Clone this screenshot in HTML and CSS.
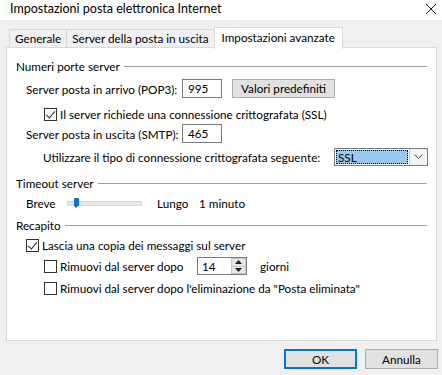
FILE: index.html
```html
<!DOCTYPE html>
<html lang="it">
<head>
  <meta charset="UTF-8">
  <title>Impostazioni posta elettronica Internet</title>
  <link rel="stylesheet" href="styles.css">
</head>
<body>
  <div class="dialog">
    <div class="titlebar">
      <span class="title">Impostazioni posta elettronica Internet</span>
      <svg class="close" width="12" height="12" viewBox="0 0 12 12"><path d="M1 1 L11 11 M11 1 L1 11" stroke="#222" stroke-width="1" fill="none"/></svg>
    </div>

    <div class="tabs">
      <div class="tab">Generale</div>
      <div class="tab">Server della posta in uscita</div>
      <div class="tab active">Impostazioni avanzate</div>
    </div>

    <div class="panel">
      <!-- Numeri porte server -->
      <div class="group-title"><span>Numeri porte server</span></div>
      <div class="row row-pop3">
        <label class="field-label">Server posta in arrivo (POP3):</label>
        <div class="textbox">995</div>
        <div class="btn btn-default">Valori predefiniti</div>
      </div>
      <div class="row row-ssl indent2">
        <span class="checkbox checked"></span>
        <span>Il server richiede una connessione crittografata (SSL)</span>
      </div>
      <div class="row row-smtp">
        <label class="field-label">Server posta in uscita (SMTP):</label>
        <div class="textbox">465</div>
      </div>
      <div class="row row-enc">
        <span class="enc-label">Utilizzare il tipo di connessione crittografata seguente:</span>
        <div class="select">
          <div class="select-value"><span>SSL</span></div>
          <div class="select-arrow">
            <svg width="9" height="6" viewBox="0 0 9 6"><path d="M0.5 0.5 L4.5 4.5 L8.5 0.5" stroke="#555" fill="none"/></svg>
          </div>
        </div>
      </div>

      <!-- Timeout server -->
      <div class="group-title gap-timeout"><span>Timeout server</span></div>
      <div class="row row-slider">
        <span class="slider-min">Breve</span>
        <div class="slider">
          <div class="track"></div>
          <div class="thumb"></div>
        </div>
        <span class="slider-max">Lungo</span>
        <span>1 minuto</span>
      </div>

      <!-- Recapito -->
      <div class="group-title gap-recapito"><span>Recapito</span></div>
      <div class="row row-copy">
        <span class="checkbox checked"></span>
        <span>Lascia una copia dei messaggi sul server</span>
      </div>
      <div class="row row-remove indent2">
        <span class="checkbox"></span>
        <span class="remove-label">Rimuovi dal server dopo</span>
        <div class="spinner">
          <div class="spin-value">14</div>
          <div class="spin-buttons">
            <div class="spin-btn"><svg width="7" height="4" viewBox="0 0 7 4"><path d="M0 4 L3.5 0 L7 4 Z" fill="#222"/></svg></div>
            <div class="spin-btn"><svg width="7" height="4" viewBox="0 0 7 4"><path d="M0 0 L3.5 4 L7 0 Z" fill="#222"/></svg></div>
          </div>
        </div>
        <span>giorni</span>
      </div>
      <div class="row row-remove2 indent2">
        <span class="checkbox"></span>
        <span>Rimuovi dal server dopo l'eliminazione da "Posta eliminata"</span>
      </div>
    </div>

    <div class="actions">
      <div class="btn btn-ok">OK</div>
      <div class="btn">Annulla</div>
    </div>
  </div>
</body>
</html>
```

FILE: styles.css
```css
body {
  margin: 0;
  background: #f0f0f0;
  font-family: Lato, "Noto Sans", sans-serif;
  font-size: 11.7px;
  color: #000;
}

.dialog {
  width: 442px;
  height: 375px;
  overflow: hidden;
  white-space: nowrap;
}

.titlebar {
  height: 20px;
  background: #fff;
  display: flex;
  align-items: center;
  justify-content: space-between;
  padding: 0 5px 0 10px;
  font-size: 12.5px;
  color: #000;
}

.titlebar .title {
  margin-top: -3px;
}

.close {
  margin-top: -3px;
}

/* schede */
.tabs {
  display: flex;
  margin: 9px 0 0 9px;
  height: 18px;
  position: relative;
  z-index: 1;
}

.tab {
  height: 18px;
  box-sizing: border-box;
  border: 1px solid #d9d9d9;
  border-bottom: none;
  padding: 0 5px;
  line-height: 17px;
  background: #f0f0f0;
  margin-left: -1px;
}

.tab:first-child {
  margin-left: 0;
}

.tab.active {
  background: #fff;
  height: 22px;
  margin-top: -2px;
  padding: 0 7px;
  line-height: 19px;
}

.panel {
  margin-left: 6px;
  width: 431px;
  height: 294px;
  box-sizing: border-box;
  background: #fff;
  border: 1px solid #d9d9d9;
  padding: 10px 9px 0 9px;
}

.group-title {
  display: flex;
  align-items: center;
  height: 16px;
}

.group-title::after {
  content: "";
  flex: 1;
  height: 1px;
  background: #a0a0a0;
  margin-left: 4px;
}

.gap-timeout { margin-top: 9px; }
.gap-recapito { margin-top: 6px; }

.row {
  display: flex;
  align-items: center;
  padding-left: 10px;
  height: 16px;
}

.row > * {
  flex: none;
}

.indent2 {
  padding-left: 28px;
}

.row-pop3 { height: 19px; margin-top: 5px; }
.row-ssl { margin-top: 8px; }
.row-smtp { height: 19px; margin-top: 2px; }
.row-enc { height: 18px; margin-top: 5px; padding-left: 27px; }
.row-slider { margin-top: 4px; }
.row-copy { margin-top: 4px; }
.row-remove { height: 18px; margin-top: 4px; }
.row-remove2 { margin-top: 5px; }

.field-label {
  width: 156px;
}

.textbox {
  width: 40px;
  height: 19px;
  box-sizing: border-box;
  border: 1px solid #7a7a7a;
  padding: 0 5px;
  line-height: 17px;
  background: #fff;
}

.btn {
  width: 73px;
  height: 20px;
  box-sizing: border-box;
  border: 1px solid #adadad;
  background: #e1e1e1;
  text-align: center;
  line-height: 18px;
}

.btn-default {
  width: 103px;
  height: 19px;
  line-height: 17px;
  margin-left: 10px;
}

.checkbox {
  width: 13px;
  height: 13px;
  box-sizing: border-box;
  border: 1px solid #333;
  background: #fff;
  margin-right: 3px;
  position: relative;
}

.checkbox.checked::after {
  content: "";
  position: absolute;
  left: 3px;
  top: 0px;
  width: 4px;
  height: 8px;
  border: solid #222;
  border-width: 0 1px 1px 0;
  transform: rotate(40deg);
}

.enc-label {
  width: 291px;
}

.select {
  display: flex;
  width: 94px;
  height: 18px;
  box-sizing: border-box;
  border: 1px solid #7a7a7a;
  background: #fff;
}

.select-value {
  flex: 1;
  padding: 1px;
}

.select-value span {
  display: block;
  height: 100%;
  box-sizing: border-box;
  background: #99c9ef;
  border: 1px dotted #000;
  line-height: 12px;
  padding-left: 1px;
}

.select-arrow {
  width: 17px;
  border-left: 1px solid #c8c8c8;
  background: #f3f3f3;
  display: flex;
  align-items: center;
  justify-content: center;
}

.slider-min {
  width: 41px;
}

.slider {
  position: relative;
  width: 75px;
  height: 12px;
}

.track {
  margin-top: 4px;
  height: 3px;
  background: #e7e7e7;
  border: 1px solid #d6d6d6;
}

.thumb {
  position: absolute;
  left: 7px;
  top: 1px;
  width: 5px;
  height: 8px;
  background: #0078d7;
  border-radius: 1px 1px 0 0;
}

.thumb::after {
  content: "";
  position: absolute;
  left: 0;
  top: 8px;
  border-left: 2.5px solid transparent;
  border-right: 2.5px solid transparent;
  border-top: 2px solid #0078d7;
}

.slider-max {
  margin-left: 15px;
  width: 42px;
}

.remove-label {
  width: 137px;
}

.spinner {
  display: flex;
  width: 50px;
  height: 18px;
  box-sizing: border-box;
  border: 1px solid #7a7a7a;
  background: #fff;
  margin-right: 13px;
}

.spin-value {
  flex: 1;
  padding-left: 4px;
  line-height: 17px;
}

.spin-buttons {
  width: 14px;
  display: flex;
  flex-direction: column;
}

.spin-btn {
  flex: 1;
  background: #e6e6e6;
  border: 1px solid #c8c8c8;
  margin: 0 0 0 -1px;
  display: flex;
  align-items: center;
  justify-content: center;
}

.spin-btn + .spin-btn {
  border-top: none;
}

.actions {
  display: flex;
  justify-content: flex-end;
  gap: 8px;
  margin-top: 8px;
  padding-right: 4px;
}

.btn-ok {
  border: 2px solid #0078d7;
  line-height: 16px;
}
```
